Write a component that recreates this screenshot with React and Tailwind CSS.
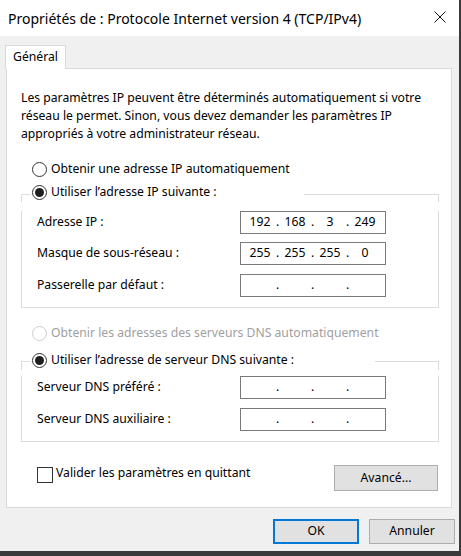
import React from 'react';

const font = { fontFamily: '"Noto Sans", "Liberation Sans", sans-serif' };

const Radio = ({ checked, disabled }) => (
  <span
    className={`flex h-[15px] w-[15px] shrink-0 items-center justify-center rounded-full border bg-white ${
      disabled ? 'border-[#cccccc]' : 'border-[#333333]'
    }`}
  >
    {checked && <span className="h-[9px] w-[9px] rounded-full bg-[#1f1f1f]" />}
  </span>
);

const IpField = ({ octets = ['', '', '', ''] }) => (
  <div className="flex h-[23px] w-[146px] shrink-0 items-center border border-[#7a7a7a] bg-white pl-[3px] text-black">
    {octets.map((o, i) => (
      <React.Fragment key={i}>
        <span className="w-[32px] text-center">{o}</span>
        {i < 3 && <span className="w-[3px] text-center">.</span>}
      </React.Fragment>
    ))}
  </div>
);

const FieldRow = ({ label, octets, className = '' }) => (
  <div className={`flex items-center ${className}`}>
    <span className="w-[218px] shrink-0 pl-[15px]">{label}</span>
    <IpField octets={octets} />
  </div>
);

// group box whose caption is a radio button sitting on the top edge
const GroupBox = ({ caption, captionWidth, lineClass, className = '', children }) => (
  <div className={`ml-[14px] w-[418px] ${className}`}>
    <div className="flex h-[20px]">
      <div className={`w-[9px] shrink-0 border-l border-t border-[#dcdcdc] ${lineClass}`} />
      <div className={`flex shrink-0 items-center gap-[4px] pl-[2px] ${captionWidth}`}>
        <Radio checked />
        <span className="whitespace-nowrap">{caption}</span>
      </div>
      <div className={`flex-1 border-r border-t border-[#dcdcdc] ${lineClass}`} />
    </div>
    <div className="border-x border-b border-[#dcdcdc] pb-[10px]">{children}</div>
  </div>
);

const Button = ({ children, primary, className = '' }) => (
  <button
    className={`flex items-center justify-center bg-[#e1e1e1] text-black ${
      primary ? 'border-2 border-[#0078d7]' : 'border border-[#adadad]'
    } ${className}`}
  >
    {children}
  </button>
);

export default function App() {
  return (
    <div style={font} className="flex h-[556px] w-[461px] flex-col bg-[#3a3a3a] text-[12.2px] text-black">
      <div className="flex h-[551px] w-[459px] flex-col bg-[#f0f0f0]">
        {/* title bar */}
        <div className="flex h-[36px] shrink-0 items-center justify-between bg-white pl-[8px] pr-[13px]">
          <span className="text-[14px]">Propriétés de : Protocole Internet version 4 (TCP/IPv4)</span>
          <svg width="12" height="12" viewBox="0 0 12 12" className="mb-[2px]">
            <path d="M0.5 0.5 L11.5 11.5 M11.5 0.5 L0.5 11.5" stroke="#111" strokeWidth="1" fill="none" />
          </svg>
        </div>

        {/* tabs */}
        <div className="flex pl-[5px] pt-[9px]">
          <div className="relative z-10 -mb-px flex h-[24px] w-[61px] items-center justify-center border border-b-0 border-[#d9d9d9] bg-white">
            Général
          </div>
        </div>

        {/* panel */}
        <div className="ml-[6px] flex h-[440px] w-[446px] flex-col border border-[#d9d9d9] bg-white">
          <p className="ml-[14px] mt-[20px] whitespace-nowrap leading-[18px]">
            Les paramètres IP peuvent être déterminés automatiquement si votre
            <br />
            réseau le permet. Sinon, vous devez demander les paramètres IP
            <br />
            appropriés à votre administrateur réseau.
          </p>

          <div className="ml-[25px] mt-[16px] flex h-[20px] items-center gap-[4px]">
            <Radio />
            <span>Obtenir une adresse IP automatiquement</span>
          </div>

          <GroupBox className="mt-[3px]" caption="Utiliser l’adresse IP suivante :" captionWidth="w-[274px]" lineClass="mt-[12px]">
            <FieldRow className="mt-[9px]" label="Adresse IP :" octets={['192', '168', '3', '249']} />
            <FieldRow className="mt-[8px]" label="Masque de sous-réseau :" octets={['255', '255', '255', '0']} />
            <FieldRow className="mt-[9px]" label="Passerelle par défaut :" />
          </GroupBox>

          <div className="ml-[25px] mt-[15px] flex h-[20px] items-center gap-[4px] text-[#a0a0a0]">
            <Radio disabled />
            <span>Obtenir les adresses des serveurs DNS automatiquement</span>
          </div>

          <GroupBox className="mt-[7px]" caption="Utiliser l’adresse de serveur DNS suivante :" captionWidth="w-[345px]" lineClass="mt-[11px]">
            <FieldRow className="mt-[6px]" label="Serveur DNS préféré :" />
            <FieldRow className="mt-[9px]" label="Serveur DNS auxiliaire :" />
          </GroupBox>

          <div className="ml-[30px] mt-[23px] flex items-start justify-between pr-[13px]">
            <div className="mt-[2px] flex items-center gap-[3px]">
              <span className="h-[16px] w-[16px] border border-[#333333] bg-white" />
              <span className="-mt-[4px]">Valider les paramètres en quittant</span>
            </div>
            <Button className="h-[26px] w-[104px]">Avancé...</Button>
          </div>
        </div>

        {/* footer buttons */}
        <div className="mt-[11px] flex justify-end gap-[10px] pr-[4px]">
          <Button primary className="h-[25px] w-[86px]">OK</Button>
          <Button className="h-[25px] w-[86px]">Annuler</Button>
        </div>
      </div>
    </div>
  );
}
